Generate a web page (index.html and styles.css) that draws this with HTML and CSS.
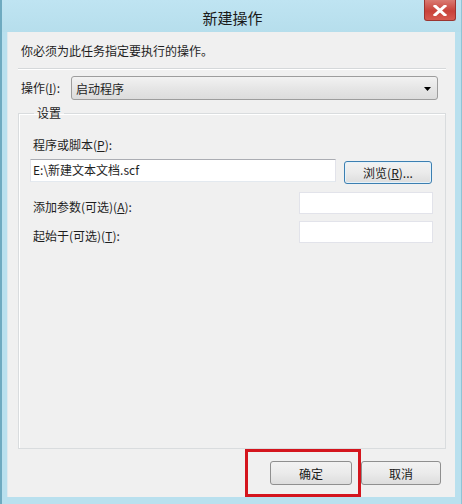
FILE: index.html
```html
<!DOCTYPE html>
<html lang="zh-CN">
<head>
<meta charset="utf-8">
<title>新建操作</title>
<link rel="stylesheet" href="styles.css">
</head>
<body>
<div class="window">
  <div class="titlebar">
    <span class="title">新建操作</span>
    <div class="close" aria-label="关闭">
      <svg width="14" height="11" viewBox="0 0 14 11"><path d="M2 1 L12 10 M12 1 L2 10" stroke="#fff" stroke-width="3" stroke-linecap="square"/></svg>
    </div>
  </div>
  <div class="client">
    <p class="intro">你必须为此任务指定要执行的操作。</p>
    <div class="sep"></div>
    <div class="action-row">
      <span class="lbl">操作(<u>I</u>):</span>
      <div class="combo">
        <span>启动程序</span>
        <svg class="arrow" width="7" height="4" viewBox="0 0 7 4"><path d="M0 0 H7 L3.5 4 Z" fill="#000"/></svg>
      </div>
    </div>
    <fieldset class="group">
      <legend>设置</legend>
      <div class="field-label">程序或脚本(<u>P</u>):</div>
      <div class="prog-row">
        <div class="input wide">E:\新建文本文档.scf</div>
        <div class="btn browse">浏览(<u>R</u>)...</div>
      </div>
      <div class="opt-row first">
        <span class="field-label inline">添加参数(可选)(<u>A</u>):</span>
        <div class="input small"></div>
      </div>
      <div class="opt-row">
        <span class="field-label inline">起始于(可选)(<u>T</u>):</span>
        <div class="input small"></div>
      </div>
    </fieldset>
    <div class="footer">
      <div class="btn ok">确定</div>
      <div class="btn cancel">取消</div>
      <div class="highlight"></div>
    </div>
  </div>
</div>
</body>
</html>
```

FILE: styles.css
```css
* { box-sizing: border-box; }
html, body { margin: 0; padding: 0; }
body {
  width: 462px;
  height: 504px;
  overflow: hidden;
  font-family: "Noto Sans CJK SC", "Noto Sans", sans-serif;
  font-size: 12px;
  color: #1e1e1e;
}
.window {
  width: 462px;
  height: 504px;
  background: #b9e0ee;
  border-left: 2px solid #6eaac0;
  border-right: 1px solid #8fc4d6;
  display: flex;
  flex-direction: column;
  padding: 0 6px 7px 5px;
}
.titlebar {
  position: relative;
  height: 32px;
  display: flex;
  align-items: center;
  justify-content: center;
  background: linear-gradient(#bfe4f2, #b6deec);
  margin: 0 -6px 0 -5px;
}
.title {
  font-size: 15px;
  color: #1a1a1a;
  margin-left: 2px;
  margin-top: 2px;
}
.close {
  position: absolute;
  top: 0;
  right: 5px;
  width: 32px;
  height: 21px;
  background: linear-gradient(#d97a72, #c8423a 55%, #d65a50);
  border: 1px solid #9a3530;
  border-top: none;
  border-radius: 0 0 3px 3px;
  display: flex;
  align-items: center;
  justify-content: center;
}
.client {
  flex: 1;
  background: #f0f0f0;
  display: flex;
  flex-direction: column;
  border-left: 1px solid #dfe9ee;
}
.intro {
  margin: 11px 0 0 13px;
  line-height: 16px;
  height: 16px;
}
.sep {
  margin: 9px 9px 0 10px;
  height: 2px;
  border-top: 1px solid #d5d8da;
  border-bottom: 1px solid #fff;
}
.action-row {
  display: flex;
  align-items: center;
  margin-top: 6px;
  height: 24px;
}
.lbl {
  margin-left: 13px;
  width: 50px;
  line-height: 16px;
}
.combo {
  margin-left: 0;
  width: 367px;
  height: 24px;
  border: 1px solid #9d9d9d;
  border-radius: 3px;
  background: linear-gradient(#f2f2f2, #e6e6e6 50%, #dcdcdc);
  display: flex;
  align-items: center;
  justify-content: space-between;
  padding: 0 6px 0 4px;
}
.arrow { margin-top: 1px; }
.group {
  margin: 5px 9px 0 10px;
  padding: 0 12px 0 11px;
  border: 1px solid #d9dcde;
  box-shadow: inset 1px 1px 0 #fff;
  flex: 1;
  min-width: 0;
}
.group legend {
  margin-left: 4px;
  padding: 0 3px;
  line-height: 16px;
  font-size: 12px;
}
.field-label {
  margin: 16px 0 0 3px;
  line-height: 16px;
}
.field-label.inline { margin: 0 0 -1px 3px; }
.prog-row {
  display: flex;
  align-items: flex-start;
  gap: 8px;
  margin-top: 6px;
}
.input {
  background: #fff;
  border: 1px solid #e2e3ea;
  height: 22px;
  line-height: 20px;
  padding-left: 2px;
}
.input.wide {
  width: 306px;
  border-color: #abadb3 #e2e3ea #e3e9ef #e2e3ea;
  height: 23px;
}
.input.small { width: 134px; }
.btn {
  display: flex;
  align-items: center;
  justify-content: center;
  border: 1px solid #acacac;
  border-radius: 3px;
  background: linear-gradient(#f2f2f2, #ebebeb 50%, #dddddd);
  color: #1a1a1a;
}
.browse {
  width: 88px;
  height: 23px;
  margin-top: 2px;
  border: 1px solid #3c7fb1;
  box-shadow: inset 0 0 0 1px #e4f2fb;
}
.opt-row {
  display: flex;
  justify-content: space-between;
  align-items: flex-end;
  margin-top: 7px;
}
.opt-row.first { margin-top: 8px; }
.footer {
  position: relative;
  display: flex;
  justify-content: flex-end;
  gap: 9px;
  padding: 12px 14px 12px 0;
}
.footer .btn { height: 24px; }
.ok { width: 82px; border-color: #8f8f8f; }
.cancel { width: 80px; border-color: #8f8f8f; }
.highlight {
  position: absolute;
  left: 237px;
  top: 0;
  width: 116px;
  height: 48px;
  border: 3px solid #d4151d;
}
```
